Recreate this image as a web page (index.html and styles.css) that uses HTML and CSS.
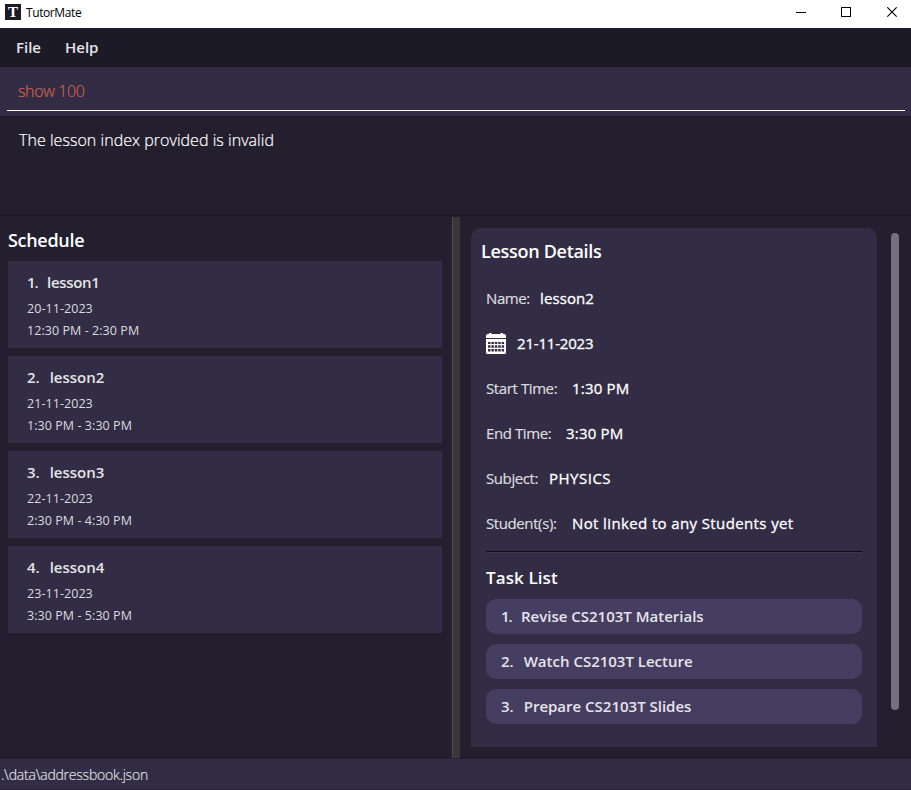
FILE: index.html
```html
<!DOCTYPE html>
<html lang="en">
<head>
<meta charset="utf-8">
<title>TutorMate</title>
<link rel="stylesheet" href="styles.css">
</head>
<body>
<div class="window">
  <header class="titlebar">
    <span class="logo">T</span>
    <span class="app-name">TutorMate</span>
    <div class="controls">
      <svg width="11" height="11" viewBox="0 0 11 11"><path d="M1 5.500h10" stroke="#000"/></svg>
      <svg width="11" height="11" viewBox="0 0 11 11"><rect x=".5" y=".5" width="9" height="9" fill="none" stroke="#000"/></svg>
      <svg width="11" height="11" viewBox="0 0 11 11"><path d="M.3 .3l9.400 9.400M9.700 .3L.3 9.700" stroke="#000" stroke-width="1.100"/></svg>
    </div>
  </header>
  <nav class="menubar"><span class="menu-file">File</span><span class="menu-help">Help</span></nav>
  <div class="command"><div class="command-field"><span>show 100</span></div></div>
  <div class="result"><span>The lesson index provided is invalid</span></div>
  <main class="split">
    <section class="schedule">
      <h2 class="heading">Schedule</h2>
      <article class="lesson"><h3><span class="index-one">1.</span><span class="title-one">lesson1</span></h3><p>20-11-2023</p><p>12:30 PM - 2:30 PM</p></article>
      <article class="lesson"><h3><span>2.</span><span>lesson2</span></h3><p>21-11-2023</p><p>1:30 PM - 3:30 PM</p></article>
      <article class="lesson"><h3><span>3.</span><span>lesson3</span></h3><p>22-11-2023</p><p>2:30 PM - 4:30 PM</p></article>
      <article class="lesson"><h3><span>4.</span><span>lesson4</span></h3><p>23-11-2023</p><p>3:30 PM - 5:30 PM</p></article>
    </section>
    <div class="divider"></div>
    <section class="details">
      <h2 class="heading">Lesson Details</h2>
      <div class="field"><span class="label name">Name:</span><span class="value">lesson2</span></div>
      <div class="field">
        <svg class="calendar" width="20" height="21" viewBox="0 0 20 21">
          <path fill="#fff" d="M0 2.500Q0 1 1.500 1H3V0h2.500v1h9V0H17v1h1.500Q20 1 20 2.500V5H0z"/>
          <path fill="#fff" fill-rule="evenodd" d="M0 6h20v13.500Q20 21 18.500 21h-17Q0 21 0 19.500zM2 9v2h2.500V9zm3.400 0v2h2.500V9zm3.400 0v2h2.500V9zm3.400 0v2h2.500V9zm3.400 0v2h2.500V9zM2 12.200v2.500h2.500v-2.500zm3.400 0v2.500h2.500v-2.500zm3.400 0v2.500h2.500v-2.500zm3.400 0v2.500h2.500v-2.500zm3.400 0v2.500h2.500v-2.500zM2 16v2.500h2.500V16zm3.400 0v2.500h2.500V16zm3.400 0v2.500h2.500V16zm3.400 0v2.500h2.500V16zm3.400 0v2.500h2.500V16z"/>
        </svg>
        <span class="value date">21-11-2023</span>
      </div>
      <div class="field"><span class="label start">Start Time:</span><span class="value time">1:30 PM</span></div>
      <div class="field"><span class="label end">End Time:</span><span class="value time">3:30 PM</span></div>
      <div class="field"><span class="label subject">Subject:</span><span class="value caps">PHYSICS</span></div>
      <div class="field"><span class="label students">Student(s):</span><span class="value long">Not linked to any Students yet</span></div>
      <div class="separator"></div>
      <h2 class="tasks-heading">Task List</h2>
      <div class="task"><span class="index-one">1.</span><span>Revise CS2103T Materials</span></div>
      <div class="task"><span>2.</span><span>Watch CS2103T Lecture</span></div>
      <div class="task"><span>3.</span><span>Prepare CS2103T Slides</span></div>
    </section>
    <div class="scrollbar"></div>
  </main>
  <footer class="status"><span>.\data\addressbook.json</span></footer>
</div>
</body>
</html>
```
FILE: styles.css
```css
* { box-sizing: border-box; }
body { margin: 0; font-family: "Open Sans", "Noto Sans", sans-serif; color: #fff; background: #231f2e; }
h2, h3, p { margin: 0; }
span { white-space: nowrap; }
.window { width: 911px; height: 790px; display: flex; flex-direction: column; overflow: hidden; }
.titlebar { height: 28px; background: #fff; color: #000; display: flex; align-items: center; padding: 0 13px 4px 5px; flex: none; }
.logo { width: 16px; height: 16px; background: #1d1a27; color: #fff; font: bold 15px/16px "Liberation Serif", serif; text-align: center; }
.app-name { margin-left: 5px; font-size: 12px; letter-spacing: -0.4px; }
.controls { margin-left: auto; display: flex; gap: 35px; }
.controls svg { display: block; }
.menubar { height: 39px; background: #1d1a27; display: flex; align-items: center; padding: 0 0 2px 16px; font-size: 15px; font-weight: 600; color: #e4e4e6; flex: none; }
.menu-file { width: 49px; }
.command { height: 50px; background: #322d45; border-bottom: 1px solid #1b1824; padding: 0 6px 0 7px; flex: none; }
.command-field { height: 44px; border-bottom: 1px solid #fff; padding-left: 11px; font-size: 16px; line-height: 48px; font-weight: 300; letter-spacing: -0.35px; color: #d0604f; -webkit-text-stroke: 0.2px; }
.result { height: 99px; border-bottom: 1px solid #1b1824; padding: 12px 19px; font-size: 16px; line-height: 22px; font-weight: 300; letter-spacing: 0.04px; -webkit-text-stroke: 0.2px; flex: none; }
.split { flex: 1; display: flex; padding-top: 1px; min-height: 0; }
.schedule { width: 452px; padding: 11px 10px 0 8px; }
.heading { font-size: 18px; font-weight: 600; line-height: 24px; letter-spacing: -0.3px; }
.schedule .heading { margin-bottom: 9px; }
.lesson { height: 87px; margin-bottom: 8px; background: #322d45; padding: 10px 19px; font-size: 12.5px; line-height: 22px; letter-spacing: 0.06px; color: #dcdbdf; }
.lesson h3 { display: flex; gap: 10px; font-size: 15px; line-height: 22px; letter-spacing: 0; margin-bottom: 5px; font-weight: 600; color: #e4e4e6; }
.index-one { width: 10px; letter-spacing: -1px; }
.title-one { letter-spacing: -0.3px; }
.divider { width: 8px; height: 541px; background: #383838; border-left: 1px solid #4c4c4c; }
.details { width: 406px; height: 519px; margin: 11px 0 0 11px; background: #322d45; border-radius: 10px 10px 0 0; padding: 11px 15px 0; }
.details .heading { margin: 0 0 12px -5px; }
.field { display: flex; align-items: center; height: 45px; font-size: 15px; }
.label { color: #dcdbdf; letter-spacing: -0.4px; -webkit-text-stroke: 0.2px; }
.name { width: 54px; }
.start { width: 86px; }
.end { width: 80px; }
.subject { width: 63px; }
.students { width: 86px; }
.value { font-weight: 500; letter-spacing: 0.1px; -webkit-text-stroke: 0.3px; }
.date { letter-spacing: -0.2px; }
.time { letter-spacing: 0.2px; }
.caps { letter-spacing: 0.5px; }
.long { letter-spacing: 0.38px; }
.calendar { margin: 1px 11px 0 0; }
.separator { height: 2px; background: #0e0c15; border-bottom: 1px solid #3d3850; margin-top: 6px; }
.tasks-heading { font-size: 17px; font-weight: 600; line-height: 24px; letter-spacing: 0.1px; margin: 13px 0 9px; }
.task { height: 35px; margin-bottom: 10px; border-radius: 10px; background: #463e60; display: flex; gap: 10px; align-items: center; padding: 0 0 2px 15px; font-size: 15px; font-weight: 600; color: #e6e4eb; }
.scrollbar { width: 8px; height: 477px; margin: 16px 0 0 14px; border-radius: 4px; background: #737080; }
.status { height: 31px; background: #322d45; border-bottom: 1px solid #231f2e; font-size: 14px; line-height: 31px; font-weight: 300; letter-spacing: -0.22px; color: #e4e4e6; -webkit-text-stroke: 0.15px; flex: none; padding-left: 1px; }
```
